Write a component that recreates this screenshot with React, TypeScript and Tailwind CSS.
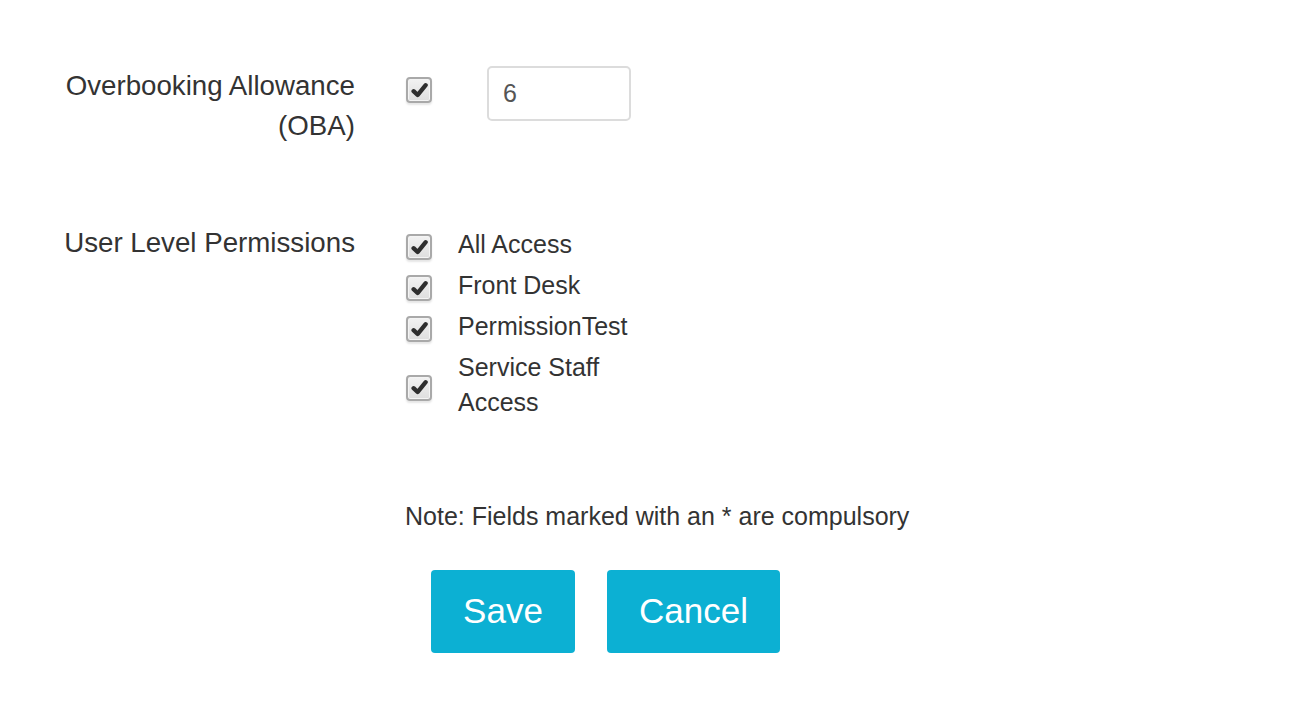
const permissions = ["All Access", "Front Desk", "PermissionTest", "Service Staff Access"];

const CheckMark = () => (
  <svg viewBox="0 0 16 16" className="h-[17px] w-[17px]">
    <polyline
      points="2.4,8.6 6.2,12.3 13.8,3"
      fill="none"
      stroke="#2e2e2e"
      strokeWidth="4"
      strokeLinecap="round"
      strokeLinejoin="round"
    />
  </svg>
);

const Checkbox = () => (
  <div className="flex h-[26px] w-[26px] shrink-0 items-center justify-center rounded-[4px] border-2 border-[#a9a9a9] bg-linear-to-b from-[#f2f2f2] to-[#dedede] shadow-[inset_0_0_0_1px_#f4f4f4,0_2px_2px_rgba(0,0,0,0.1)]">
    <CheckMark />
  </div>
);

export default function App() {
  return (
    <div className="min-h-screen bg-white pt-[66px] font-['Liberation_Sans',Arial,sans-serif] text-[#333]">
      {/* OBA row */}
      <div className="flex">
        <label className="w-[355px] shrink-0 text-right text-[27.7px] leading-[40px]">
          Overbooking Allowance
          <br />
          (OBA)
        </label>
        <div className="ml-[50px] flex items-start">
          <div className="mt-[11px] ml-[1px]">
            <Checkbox />
          </div>
          <input
            type="text"
            defaultValue="6"
            className="ml-[55px] h-[55px] w-[144px] rounded-[5px] border-2 border-[#dcdcdc] px-[14px] text-[25px] text-[#555] outline-none"
          />
        </div>
      </div>

      {/* Permissions row */}
      <div className="mt-[79px] flex">
        <label className="w-[355px] shrink-0 text-right text-[27.7px] leading-[35px]">User Level Permissions</label>
        <div className="ml-[50px] flex flex-col gap-[6px] pt-[2px]">
          {permissions.map((p) => (
            <div key={p} className="flex items-center">
              <div className="mt-[5px] ml-[1px]">
                <Checkbox />
              </div>
              <span className="ml-[26px] w-[185px] text-[25px] leading-[35px]">{p}</span>
            </div>
          ))}
        </div>
      </div>

      <p className="ml-[405px] mt-[79px] text-[25px] leading-[35px]">Note: Fields marked with an * are compulsory</p>

      <div className="ml-[431px] mt-[36px] flex gap-[32px]">
        <button className="h-[83px] w-[144px] rounded-[4px] bg-[#0cb0d3] text-[35px] text-white">Save</button>
        <button className="h-[83px] w-[173px] rounded-[4px] bg-[#0cb0d3] text-[35px] text-white">Cancel</button>
      </div>
    </div>
  );
}
